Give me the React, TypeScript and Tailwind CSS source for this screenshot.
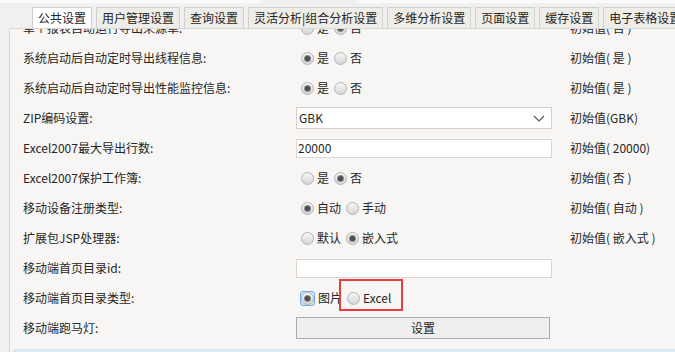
import React from "react";

const tabs = [
  "公共设置",
  "用户管理设置",
  "查询设置",
  "灵活分析|组合分析设置",
  "多维分析设置",
  "页面设置",
  "缓存设置",
  "电子表格设置",
];

const Radio = ({ checked, focus }: { checked?: boolean; focus?: boolean }) => {
  const dot = (
    <span className="flex w-[13px] h-[13px] shrink-0 items-center justify-center rounded-full border border-[#b3b3b3] bg-gradient-to-b from-[#f6f6f6] to-[#d6d6d6]">
      {checked && <span className="w-[5px] h-[5px] rounded-full bg-[#4d4d4d] ring-1 ring-[#8a8a8a]" />}
    </span>
  );
  if (focus) {
    return (
      <span className="flex w-[15px] h-[15px] -ml-px items-center justify-center rounded-[3px] border border-[#6fa9e6] bg-[#d4e7fa]">
        {dot}
      </span>
    );
  }
  return dot;
};

const RadioGroup = ({ options, value, focus }: { options: string[]; value: number; focus?: boolean }) => (
  <div className="flex items-center pl-[5px]">
    {options.map((o, i) => (
      <div key={o} className="flex items-center mr-[5px]">
        <Radio checked={i === value} focus={focus && i === value} />
        <span className="ml-[3px]">{o}</span>
      </div>
    ))}
  </div>
);

type Row = { label: string; control: React.ReactNode; init?: string };

const rows: Row[] = [
  { label: "单个报表自动运行导出来源单:", control: <RadioGroup options={["是", "否"]} value={1} />, init: "初始值( 否 )" },
  { label: "系统启动后自动定时导出线程信息:", control: <RadioGroup options={["是", "否"]} value={0} />, init: "初始值( 是 )" },
  { label: "系统启动后自动定时导出性能监控信息:", control: <RadioGroup options={["是", "否"]} value={0} />, init: "初始值( 是 )" },
  {
    label: "ZIP编码设置:",
    control: (
      <div className="flex items-center justify-between w-[256px] h-[22px] border border-[#d6d0c8] bg-white pl-[2px] pr-[6px]">
        <span>GBK</span>
        <svg width="12" height="7" viewBox="0 0 12 7">
          <path d="M1 1l5 5 5-5" fill="none" stroke="#555" strokeWidth="1.1" />
        </svg>
      </div>
    ),
    init: "初始值(GBK)",
  },
  {
    label: "Excel2007最大导出行数:",
    control: (
      <div className="flex items-center w-[256px] h-[19px] border border-[#ddd6cf] bg-white pl-px">20000</div>
    ),
    init: "初始值( 20000)",
  },
  { label: "Excel2007保护工作簿:", control: <RadioGroup options={["是", "否"]} value={1} />, init: "初始值( 否 )" },
  { label: "移动设备注册类型:", control: <RadioGroup options={["自动", "手动"]} value={0} />, init: "初始值( 自动 )" },
  { label: "扩展包JSP处理器:", control: <RadioGroup options={["默认", "嵌入式"]} value={1} />, init: "初始值( 嵌入式 )" },
  {
    label: "移动端首页目录id:",
    control: <div className="w-[256px] h-[19px] border border-[#ddd6cf] bg-white" />,
  },
  {
    label: "移动端首页目录类型:",
    control: (
      <div className="relative">
        <RadioGroup options={["图片", "Excel"]} value={0} focus />
        <div className="absolute left-[43px] top-[-12px] w-[64px] h-[32px] border-2 border-[#ea3b40]" />
      </div>
    ),
  },
  {
    label: "移动端跑马灯:",
    control: (
      <div className="flex items-center justify-center w-[254px] h-[22px] border border-[#a7aeb7] bg-[#efefef]">设置</div>
    ),
  },
];

export default function App() {
  return (
    <div className="w-[675px] h-[352px] overflow-hidden flex flex-col bg-[#f0f0f0] text-[12px] leading-[14px] text-[#262626] font-['Noto_Sans_CJK_SC','Noto_Sans',sans-serif]">
      <div className="flex h-[3px] shrink-0">
        <div className="w-[260px] bg-[#fafafa]" />
        <div className="w-[97px]" />
        <div className="flex-1 bg-[#fafafa]" />
      </div>
      <div className="h-[4px] shrink-0" />
      <div className="flex gap-[4px] pl-[32px] h-[21px] shrink-0">
        {tabs.map((t, i) => (
          <div
            key={t}
            className={
              i === 0
                ? "flex items-center px-[5px] border border-b-0 border-[#cfcfcf] bg-white whitespace-nowrap"
                : "flex items-center px-[5px] border border-b-0 border-[#d2d0cb] bg-[#efede8] whitespace-nowrap"
            }
          >
            {t}
          </div>
        ))}
      </div>
      <div className="flex flex-1 min-h-0">
        <div className="w-[9px] shrink-0" />
        <div className="flex flex-col flex-1 min-w-0 border-l border-t border-[#d8d8d8] bg-[#f7f6f4]">
          <div className="flex-1 min-h-0 overflow-hidden">
            <div className="-mt-[16px]">
              {rows.map((r) => (
                <div key={r.label} className="flex items-center h-[30px]">
                  <div className="w-[286px] shrink-0 pl-[13px] whitespace-nowrap">{r.label}</div>
                  <div className="w-[274px] shrink-0">{r.control}</div>
                  <div className="whitespace-nowrap">{r.init}</div>
                </div>
              ))}
            </div>
          </div>
          <div className="h-[3px] ml-[3px] shrink-0 bg-[#d9e8f6]" />
        </div>
      </div>
    </div>
  );
}
